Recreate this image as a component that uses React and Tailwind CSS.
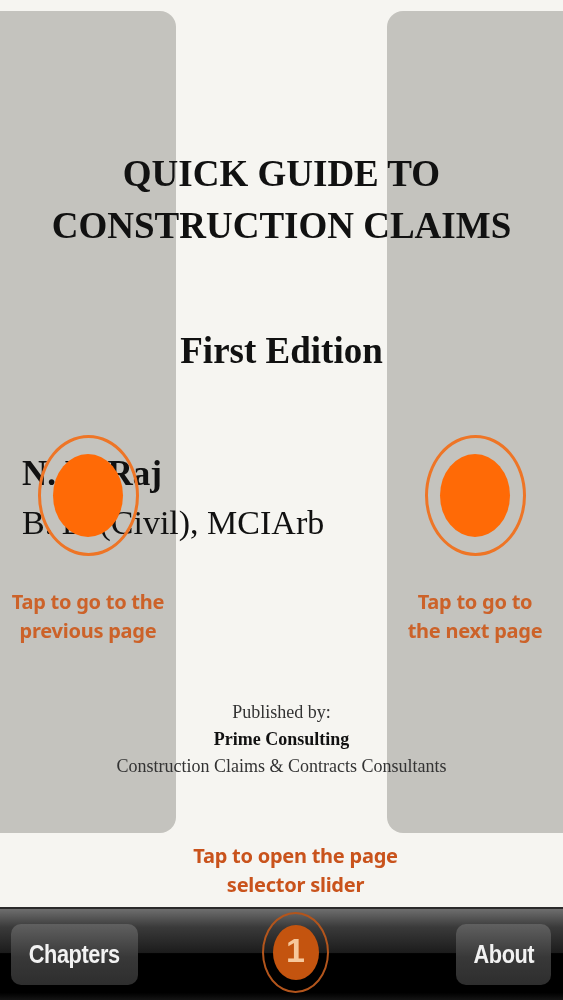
import React from "react";

const serif = "font-['Liberation_Serif',serif]";
const hint = "font-['Noto_Sans',sans-serif] font-bold text-[20px] leading-[29px] tracking-[-0.25px] text-center";

function TapPanel({ lines }) {
  return (
    <div className="w-[176px] pt-[435px] flex flex-col items-center">
      <div className="w-[101px] h-[121px] rounded-[50%] border-[3px] border-[#ee7526] flex items-center justify-center">
        <div className="w-[70px] h-[83px] rounded-[50%] bg-[#ff6a06]" />
      </div>
      <div className={`mt-[31px] ${hint} text-[#cc6229]`}>
        {lines.map((l) => (
          <div key={l}>{l}</div>
        ))}
      </div>
    </div>
  );
}

function ToolButton({ children, className }) {
  return (
    <button
      className={`h-[61px] rounded-[10px] bg-[linear-gradient(#606060,#383838_55%,#2e2e2e)] text-[#f2f2f2] font-['Liberation_Sans',sans-serif] font-bold text-[25px] tracking-[-0.5px] ${className}`}
    >
      <span className="inline-block scale-x-[0.87]">{children}</span>
    </button>
  );
}

export default function App() {
  return (
    <div className="w-[563px] h-[1000px] flex flex-col overflow-hidden bg-[#f6f5f1] blur-[0.6px]">
      <main className="relative flex-1 flex flex-col">
        {/* panels go under the page text */}
        <div className="absolute inset-0 pt-[11px] flex justify-between">
          <div className="w-[176px] h-[822px] rounded-r-[16px] bg-[#c4c3be]" />
          <div className="w-[176px] h-[822px] rounded-l-[16px] bg-[#c4c3be]" />
        </div>

        <div className={`relative ${serif} text-[#111] pt-[148px]`}>
          <h1 className="text-center font-bold text-[37px] leading-[52px]">
            QUICK GUIDE TO
            <br />
            CONSTRUCTION CLAIMS
          </h1>
          <h2 className="mt-[73px] text-center font-bold text-[37px] leading-[52px]">First Edition</h2>
          <div className="mt-[72px] pl-[22px] text-[34px] leading-[49px]">
            <div className="font-bold text-[35px]">N. D. Raj</div>
            <div>B. E. (Civil), MCIArb</div>
          </div>
          <div className="mt-[152px] text-center text-[18px] leading-[27px] text-[#333]">
            <div>Published by:</div>
            <div className="font-bold text-[#111]">Prime Consulting</div>
            <div>Construction Claims &amp; Contracts Consultants</div>
          </div>
        </div>

        {/* tap hints sit on top of the text */}
        <div className="absolute inset-0 flex justify-between">
          <TapPanel lines={["Tap to go to the", "previous page"]} />
          <TapPanel lines={["Tap to go to", "the next page"]} />
        </div>

        <div className={`relative mt-auto pb-[8px] pl-[28px] ${hint} leading-[28px] text-[#c9531c]`}>
          <div>Tap to open the page</div>
          <div>selector slider</div>
        </div>
      </main>

      <footer className="relative h-[93px] shrink-0 border-t-2 border-[#2a2a2a] bg-[linear-gradient(#6e6e6e,#3a3a3a_20%,#1c1c1c_48%,#000_49%,#000_92%,#141414)] flex items-center justify-between pl-[11px] pr-[12px]">
        <ToolButton className="w-[127px]">Chapters</ToolButton>
        <div className="absolute left-[262px] top-[3px] w-[67px] h-[81px] rounded-[50%] border-2 border-[#b3551c] flex items-center justify-center">
          <div className="w-[46px] h-[55px] rounded-[50%] bg-[#c4540f] flex items-center justify-center font-['Liberation_Sans',sans-serif] font-bold text-[34px] leading-[34px] pb-[6px] text-[#f6c89c]">
            1
          </div>
        </div>
        <ToolButton className="w-[95px]">About</ToolButton>
      </footer>
    </div>
  );
}
